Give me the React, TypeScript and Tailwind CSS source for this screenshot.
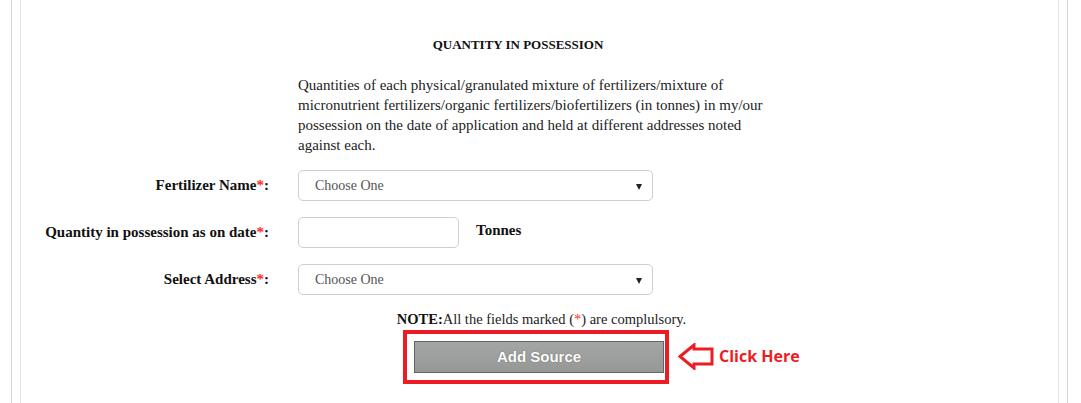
import React from "react";

const serif = { fontFamily: '"Liberation Serif", "DejaVu Serif", serif' };

const Label = ({ text }: { text: string }) => (
  <label className="w-[268px] shrink-0 text-right text-[15px] font-bold text-[#111]">
    {text}
    <span className="text-[#ff2a2a]">*</span>:
  </label>
);

const Select = () => (
  <div className="relative w-[355px] h-[31px] rounded-[5px] border border-[#cfcfcf] bg-white flex items-center pl-4 text-[14px] text-[#555]">
    Choose One
    <span className="absolute right-[10px] top-[13px] w-0 h-0 border-l-[3px] border-r-[3px] border-t-[6px] border-l-transparent border-r-transparent border-t-[#222]" />
  </div>
);

export default function App() {
  return (
    <div className="w-[1081px] h-[403px] bg-white overflow-hidden" style={serif}>
      <div className="ml-[11px] w-[1057px] h-full border-x border-[#d5d5d5]">
        <div className="ml-[8px] w-[1039px] h-full border-x border-[#e3e5ee] pt-[37px]">
          <div className="ml-[277px] w-[440px] text-center text-[13px] font-bold text-[#111] leading-[16px]">
            QUANTITY IN POSSESSION
          </div>
          <p className="ml-[277px] mt-[22px] text-[15px] leading-[20px] text-[#222]">
            Quantities of each physical/granulated mixture of fertilizers/mixture of
            <br />
            micronutrient fertilizers/organic fertilizers/biofertilizers (in tonnes) in my/our
            <br />
            possession on the date of application and held at different addresses noted
            <br />
            against each.
          </p>

          <div className="mt-[15px] flex flex-col gap-[16px] -ml-[20px]">
            <div className="flex items-center gap-[29px]">
              <Label text="Fertilizer Name" />
              <Select />
            </div>
            <div className="flex items-center gap-[29px]">
              <Label text="Quantity in possession as on date" />
              <div className="flex items-center gap-[17px]">
                <div className="w-[161px] h-[31px] rounded-[5px] border border-[#cfcfcf] bg-white" />
                <span className="text-[15px] font-bold text-[#111] -mt-[4px]">Tonnes</span>
              </div>
            </div>
            <div className="flex items-center gap-[29px]">
              <Label text="Select Address" />
              <Select />
            </div>
          </div>

          <div className="-ml-[20px] w-[1081px] flex flex-col items-center">
            <p className="mt-[15px] text-[14.5px] leading-[18px] text-[#222]">
              <b className="text-[#111]">NOTE:</b>All the fields marked (<span className="text-[#ff2a2a]">*</span>) are complulsory.
            </p>
            <div className="relative mt-[2px] ml-[-11px]">
              <div className="w-[266px] h-[54px] border-[4px] border-[#ed1c24] flex items-center pl-[7px]">
                <button
                  className="w-[250px] h-[32px] bg-gradient-to-b from-[#a3a6a4] to-[#959896] border border-[#5f6664] text-white font-bold text-[15px]"
                  style={{ fontFamily: '"Liberation Sans", Arial, sans-serif', textShadow: "0 0 1px #555" }}
                >
                  Add Source
                </button>
              </div>
              <div className="absolute left-[275px] top-[13px] flex items-center gap-[5px]">
                <svg width="36" height="27" viewBox="0 0 36 27">
                  <polygon
                    points="2,13.5 16,2 16,6 34,6 34,21 16,21 16,25"
                    fill="none"
                    stroke="#ed1c24"
                    strokeWidth="3"
                    strokeLinejoin="miter"
                  />
                </svg>
                <span
                  className="text-[16px] font-bold text-[#ed1c24] whitespace-nowrap -mt-[2px]"
                  style={{ fontFamily: '"Open Sans", "Liberation Sans", sans-serif' }}
                >
                  Click Here
                </span>
              </div>
            </div>
          </div>
        </div>
      </div>
    </div>
  );
}
